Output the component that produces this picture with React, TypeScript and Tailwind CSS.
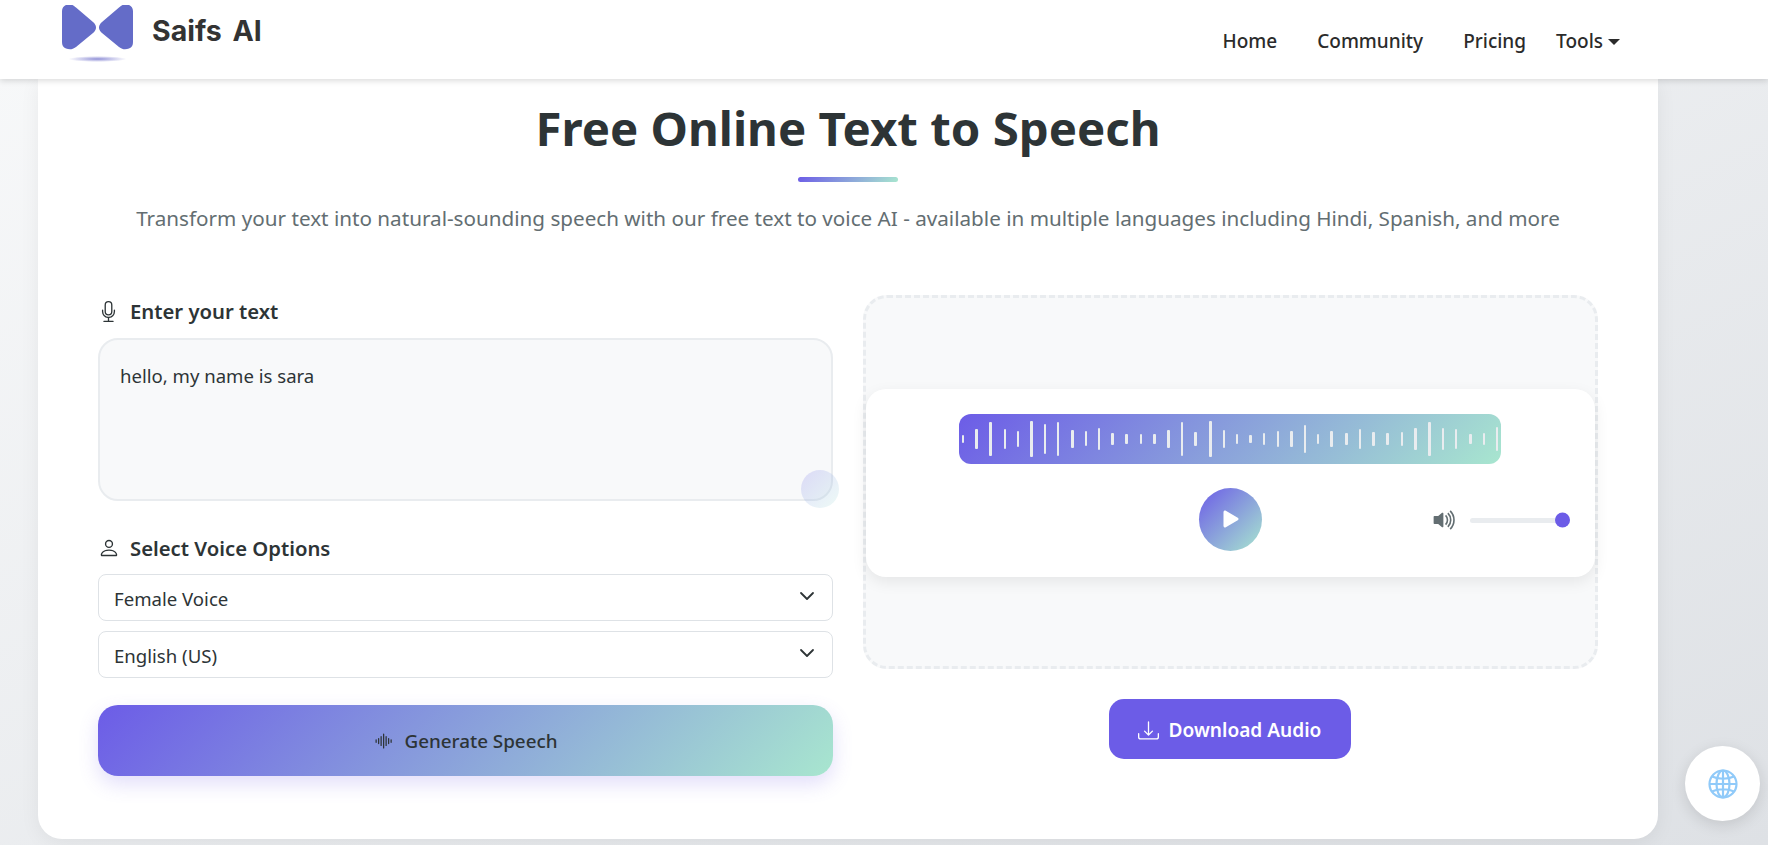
import { ChevronDown } from 'lucide-react';
import { BsMic, BsPerson, BsSoundwave, BsDownload, BsVolumeUpFill, BsPlayFill } from 'react-icons/bs';

const bars = [
  [8, 2], [20, 3], [34, 3], [20, 2], [16, 2], [36, 3], [30, 2], [34, 2], [18, 3], [15, 2],
  [22, 2], [12, 3], [10, 3], [10, 2], [10, 3], [18, 3], [34, 2], [14, 3], [36, 3], [18, 2],
  [10, 2], [8, 3], [12, 2], [16, 2], [16, 3], [28, 2], [10, 2], [16, 3], [12, 3], [20, 2],
  [14, 3], [12, 3], [14, 2], [22, 3], [34, 3], [22, 2], [20, 2], [10, 3], [12, 2], [24, 2],
];

const navLinks = ['Home', 'Community', 'Pricing'];

const Logo = () => (
  <svg width="72" height="58" viewBox="0 0 72 58" fill="none">
    <defs>
      <radialGradient id="logoShadow" cx="50%" cy="50%" r="50%">
        <stop offset="0%" stopColor="#8f8fd6" />
        <stop offset="100%" stopColor="#8f8fd6" stopOpacity="0" />
      </radialGradient>
    </defs>
    <path d="M0 6C0 1 5-1.5 9-0.5C11 0 12 1 14 2.5L31 17C35 20.5 35 24.5 31 28L14 42C10 45 7 44.500 4 43.500C1 42.500 0 40 0 37Z" fill="#646cc8" />
    <path d="M71 6C71 1 66-1.500 62-0.500C60 0 59 1 57 2.500L40 17C36 20.500 36 24.500 40 28L57 42C61 45 64 44.500 67 43.500C70 42.500 71 40 71 37Z" fill="#646cc8" />
    <ellipse cx="35.500" cy="54" rx="29" ry="3" fill="url(#logoShadow)" />
  </svg>
);

const GlobeIcon = () => (
  <svg width="30" height="30" viewBox="0 0 30 30" fill="none" stroke="#90caf9" strokeWidth="2.200">
    <circle cx="15" cy="15" r="13.500" />
    <ellipse cx="15" cy="15" rx="6.500" ry="13.500" />
    <path d="M15 1.500V28.500M1.500 15H28.500M4 7.500C10 10.500 20 10.500 26 7.500M4 22.500C10 19.500 20 19.500 26 22.500" />
  </svg>
);

export default function App() {
  return (
    <div className="h-[845px] overflow-hidden bg-gradient-to-br from-[#f8f9fa] to-[#dee1e5] font-['Noto_Sans',sans-serif] text-[#2d3436]">
      {/* Navbar */}
      <nav className="relative z-10 flex h-[79px] items-start justify-between bg-white pl-[62px] pr-[148px] shadow-[0_2px_6px_rgba(0,0,0,0.14)]">
        <div className="flex items-start gap-[18px] pt-[5px]">
          <Logo />
          <span className="pt-[5px] font-['Inter',sans-serif] text-[28.500px] font-bold [word-spacing:4px] text-[#333]">
            Saifs AI
          </span>
        </div>
        <div className="flex items-center pt-[27px] text-[19px] font-medium text-[#2b2b2b]">
          {navLinks.map((link) => (
            <a key={link} href="#" className="mr-[40px] leading-[28px]">
              {link}
            </a>
          ))}
          <a href="#" className="-ml-[10px] flex items-center gap-[5px] leading-[28px]">
            Tools
            <span className="mt-[2px] h-0 w-0 border-x-[6px] border-t-[6px] border-x-transparent border-t-[#2b2b2b]" />
          </a>
        </div>
      </nav>

      <main className="w-[1658px] pl-[38px]">
        <div className="h-[760px] rounded-b-[24px] bg-white px-[60px] pt-[17px] shadow-[0_4px_20px_rgba(0,0,0,0.06)]">
          {/* Header */}
          <h1 className="text-center text-[47.400px] leading-[64px] font-bold text-[#2d3436]">Free Online Text to Speech</h1>
          <div className="mx-auto mt-[17px] h-[5px] w-[100px] rounded-full bg-[linear-gradient(135deg,#6c5ce7,#a8e6cf)]" />
          <p className="mt-[21px] text-center text-[20.670px] leading-[30px] text-[#636e72]">
            Transform your text into natural-sounding speech with our free text to voice AI - available in multiple languages including Hindi, Spanish, and more
          </p>

          <div className="mt-[62px] grid grid-cols-2 gap-[30px]">
            {/* Left column */}
            <div className="pt-[2px]">
              <label className="flex h-[28px] items-center gap-[11px] text-[20.300px] font-semibold">
                <BsMic className="h-[21px] w-[21px]" />
                Enter your text
              </label>
              <div className="relative mt-[13px]">
                <textarea
                  defaultValue="hello, my name is sara"
                  className="block h-[163px] w-full resize-none rounded-[20px] border-2 border-[#e9ecef] bg-[#f8f9fa] px-[20px] pt-[23px] text-[18.570px] leading-[26px] outline-none"
                />
                <div className="absolute -right-[6px] -bottom-[7px] h-[38px] w-[38px] rounded-full bg-gradient-to-br from-[#6c5ce7] to-[#a8e6cf] opacity-20" />
              </div>

              <label className="mt-[33px] flex h-[28px] items-center gap-[10px] text-[20.300px] font-semibold">
                <BsPerson className="h-[22px] w-[22px]" />
                Select Voice Options
              </label>
              <div className="relative mt-[12px]">
                <select className="h-[47px] w-full appearance-none rounded-[8px] border border-[#dee2e6] bg-white px-[15px] pt-[2px] text-[18.600px] outline-none">
                  <option>Female Voice</option>
                </select>
                <ChevronDown className="pointer-events-none absolute top-[10px] right-[14px] h-[24px] w-[24px]" strokeWidth={1.800} />
              </div>
              <div className="relative mt-[10px]">
                <select className="h-[47px] w-full appearance-none rounded-[8px] border border-[#dee2e6] bg-white px-[15px] pt-[2px] text-[18.600px] outline-none">
                  <option>English (US)</option>
                </select>
                <ChevronDown className="pointer-events-none absolute top-[10px] right-[14px] h-[24px] w-[24px]" strokeWidth={1.800} />
              </div>

              <button className="mt-[27px] flex h-[71px] w-full items-center justify-center gap-[11px] rounded-[20px] bg-[linear-gradient(135deg,#6c5ce7,#a8e6cf)] pt-[1px] text-[18.840px] font-medium shadow-[0_8px_20px_rgba(108,92,231,0.2)]">
                <BsSoundwave className="h-[20px] w-[20px]" />
                Generate Speech
              </button>
            </div>

            {/* Right column */}
            <div className="flex flex-col items-center">
              <div className="flex h-[374px] w-full items-center rounded-[24px] border-[3px] border-dashed border-[#e9ecef] bg-[#f8f9fa] pt-[1px]">
                <div className="h-[188px] w-full rounded-[20px] bg-white pt-[25px] shadow-[0_5px_15px_rgba(0,0,0,0.08)]">
                  <div className="ml-[93px] flex h-[50px] w-[542px] items-center justify-between rounded-[12px] bg-[linear-gradient(135deg,#6c5ce7,#a8e6cf)] px-[3px]">
                    {bars.map(([height, width], i) => (
                      <span key={i} className="rounded-[1px] bg-[#e9ecef]" style={{ height, width }} />
                    ))}
                  </div>
                  <div className="mt-[24px] grid grid-cols-[1fr_63px_1fr] items-center">
                    <div />
                    <button className="flex h-[63px] w-[63px] items-center justify-center rounded-full bg-[linear-gradient(135deg,#6c5ce7,#a8e6cf)] text-white">
                      <BsPlayFill className="h-[30px] w-[30px]" />
                    </button>
                    <div className="flex items-center justify-end gap-[12px] pt-[2px] pr-[25px]">
                      <BsVolumeUpFill className="h-[26px] w-[26px] text-[#636e72]" />
                      <div className="relative h-[5px] w-[100px] rounded-full bg-[#e9ecef]">
                        <span className="absolute top-1/2 right-0 h-[15px] w-[15px] -translate-y-1/2 rounded-full bg-[#6c5ce7]" />
                      </div>
                    </div>
                  </div>
                </div>
              </div>
              <button className="mt-[30px] mr-[2px] flex h-[60px] w-[242px] items-center justify-center gap-[10px] rounded-[15px] bg-[#6c5ce7] pt-[2px] text-[19.100px] font-semibold text-white">
                <BsDownload className="h-[21px] w-[21px]" />
                Download Audio
              </button>
            </div>
          </div>
        </div>
      </main>

      {/* Floating language button */}
      <button className="fixed right-[8px] bottom-[24px] z-20 flex h-[75px] w-[75px] items-center justify-center rounded-full bg-white shadow-[0_4px_15px_rgba(0,0,0,0.12)]">
        <GlobeIcon />
      </button>
    </div>
  );
}
